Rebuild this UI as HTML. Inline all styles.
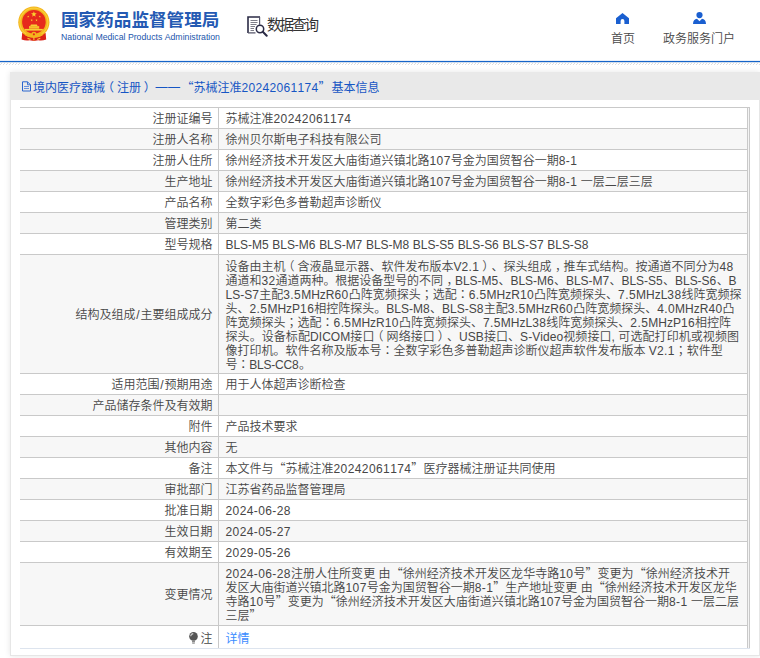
<!DOCTYPE html>
<html lang="zh-CN">
<head>
<meta charset="utf-8">
<title>国家药品监督管理局 数据查询</title>
<style>
*{box-sizing:border-box;margin:0;padding:0}
html,body{width:760px;height:658px;overflow:hidden;background:#fff}
body{position:relative;font-family:"Liberation Sans","Noto Sans CJK SC",sans-serif;font-size:12px;color:#444;font-weight:350;text-spacing-trim:space-all;font-kerning:none}
.cjk{font-family:"Noto Sans CJK SC","Liberation Sans",sans-serif}
/* header */
#hdr{position:absolute;left:0;top:0;width:760px;height:61px;background:#fff}
#emblem{position:absolute;left:17px;top:6px;width:34px;height:36px}
#t1{position:absolute;left:61px;top:7px;font-size:17.6px;line-height:24px;font-weight:700;color:#245ab3;white-space:nowrap;letter-spacing:0}
#t2{position:absolute;left:61px;top:31px;font-size:8.720px;line-height:12px;color:#2156ac;white-space:nowrap}
#q{position:absolute;left:247px;top:14px;height:22px;white-space:nowrap}
#q svg{position:absolute;left:0;top:2px}
#q span{position:absolute;left:20px;top:-1px;font-size:14.600px;line-height:21px;color:#333;letter-spacing:-2.100px;font-weight:400}
.nav{position:absolute;top:0;text-align:center;font-size:12px;color:#484848;white-space:nowrap}
.nav svg{display:block}
#blue{position:absolute;left:0;top:60px;width:760px;height:3px;background:linear-gradient(to bottom,rgba(22,100,200,.10) 0,rgba(22,100,200,.10) 1px,#1664c8 1px,#1664c8 2px,rgba(22,100,200,.22) 2px,rgba(22,100,200,.22) 3px)}
#hatch{position:absolute;left:0;top:62px;width:760px;height:3px;
 background:repeating-linear-gradient(135deg,#dedede 0,#dedede .55px,transparent .55px,transparent 2.120px)}
/* panel */
#panel{position:absolute;left:10px;top:72px;width:750px;height:584px;background:#fff;border:1px solid #e6e6e6;box-shadow:0 0 6px rgba(0,0,0,.10)}
#ptitle{position:absolute;left:-1px;top:-1px;width:750px;height:28px;background:#e9e9e9}
#ptitle .txt{position:absolute;left:23px;top:7px;font-size:12px;height:16px;line-height:16px;color:#1656c4;white-space:nowrap;font-weight:400}
#ptitle b{font-weight:inherit;letter-spacing:.33px}
#ptitle span{line-height:16px}
#ptitle svg{position:absolute;left:11px;top:9px}
/* table */
#tb{position:absolute;left:20px;top:107px;width:730px;border-collapse:collapse;table-layout:fixed}
#tb td{border-top:1px solid #c9c9c9;padding:4px 0 2px;line-height:14px;font-size:12px;vertical-align:middle;color:#464646;white-space:nowrap}
#tb td.l{width:198px;text-align:right;padding-right:5px;border-right:1px solid #c9c9c9;color:#464646}
#tb td.v{padding-left:7px}
#tb i{display:block;font-style:normal;height:14px;line-height:14px;white-space:nowrap}
#tb tr.a td{background:#f7f7f7}
#tb b{font-weight:inherit;letter-spacing:.4px}
#tb u{text-decoration:none;font-family:"Liberation Sans","Noto Sans CJK JP","Noto Sans CJK SC",sans-serif}
em{font-style:normal;position:relative}
em.pl{left:-3px}em.pr{left:2.800px}em.pc{left:3.500px}
#tb s{text-decoration:none;margin:0 .85px}
#tb a{color:#3b8cff;text-decoration:none;font-weight:400}
#tb td.m{padding:5px 0 1px 7px}
#tb td.q i{position:relative;top:-1px}
#tb tr.last td{padding:6px 0 2px}
#tb tr.last td.l{padding-right:5px}
#tb tr.last td.v{padding-left:7px}
#rb1,#rb2{position:absolute;top:107px;width:1px;height:541px;background:#c9c9c9}
#rbg{position:absolute;left:748px;top:108px;width:1px;height:540px;background:#f4f4f4}
#rb1{left:747px}#rb2{left:749px}
#bb{position:absolute;left:20px;top:648px;width:730px;height:1px;background:#dde4ee}
</style>
</head>
<body>
<div id="hdr">
 <svg id="emblem" viewBox="0 0 34 36">
  <path d="M5.200 27 L4.600 33.400 Q9 35.200 12.500 34.200 L16.900 35 L21.300 34.200 Q24.800 35.200 29.200 33.400 L28.600 27 Z" fill="#dc2318"/>
  <circle cx="16.850" cy="16.200" r="15.600" fill="#f4b51d"/>
  <circle cx="16.850" cy="16.200" r="14" fill="none" stroke="#f9cf3a" stroke-width="1.200"/>
  <circle cx="16.900" cy="15.900" r="11.800" fill="#e62a1c"/>
  <path d="M16.90 5.30L17.61 7.33L19.75 7.37L18.04 8.67L18.66 10.73L16.90 9.50L15.14 10.73L15.76 8.67L14.05 7.37L16.19 7.33z" fill="#fbd52f"/><path d="M11.20 9.40L11.48 10.21L12.34 10.23L11.66 10.75L11.91 11.57L11.20 11.08L10.49 11.57L10.74 10.75L10.06 10.23L10.92 10.21z" fill="#fbd52f"/><path d="M22.80 9.40L23.08 10.21L23.94 10.23L23.26 10.75L23.51 11.57L22.80 11.08L22.09 11.57L22.34 10.75L21.66 10.23L22.52 10.21z" fill="#fbd52f"/><path d="M14.70 13.00L14.98 13.81L15.84 13.83L15.16 14.35L15.41 15.17L14.70 14.68L13.99 15.17L14.24 14.35L13.56 13.83L14.42 13.81z" fill="#fbd52f"/><path d="M19.50 13.00L19.78 13.81L20.64 13.83L19.96 14.35L20.21 15.17L19.50 14.68L18.79 15.17L19.04 14.35L18.36 13.83L19.22 13.81z" fill="#fbd52f"/>
  <path d="M13.200 19.900l.8-1.300h5.800l.8 1.300z" fill="#f8cd35"/>
  <path d="M12 20.100h10.200v2.600h-10.200z" fill="#f6c22b"/>
  <path d="M8 22.900h17.800v1.700h-17.800z" fill="#f8cd35"/>
  <path d="M9.500 27.600 Q16.900 31.500 24.300 27.600 L25.500 29.600 Q16.900 33.800 8.300 29.600z" fill="#f4b51d"/>
  <circle cx="16.900" cy="28.300" r="2.600" fill="#f4b51d"/><circle cx="16.900" cy="28.300" r="1.100" fill="#e62a1c"/>
  <path d="M10.500 32.200l3 1.200M23.300 32.200l-3 1.200M16.900 31.500v3" stroke="#f8cd35" stroke-width="1.100" fill="none"/>
 </svg>
 <div id="t1" class="cjk">国家药品监督管理局</div>
 <div id="t2">National Medical Products Administration</div>
 <div id="q">
  <svg width="21" height="21" viewBox="0 0 21 21" fill="none">
   <path d="M1 17V1h12" stroke="#2b2b45" stroke-width="1.600"/>
   <path d="M12.600 1v7.800M1 16.800h7.500" stroke="#55556a" stroke-width="1.200"/>
   <path d="M3.500 4.500h7M3.500 6.500h7M3.500 8.500h6M3.500 10.500h4.500M3.500 12.500h3.500M3.500 14.500h3.500" stroke="#7d7d88" stroke-width="1.100"/>
   <circle cx="13" cy="13" r="3.700" stroke="#2b2b45" stroke-width="1.500" fill="#fff"/>
   <path d="M15.800 15.800l3.900 4" stroke="#2b2b45" stroke-width="2" stroke-linecap="round"/>
  </svg>
  <span class="cjk">数据查询</span>
 </div>
 <div class="nav" style="left:603px;width:40px">
  <svg width="13" height="11" viewBox="0 0 13 11" style="margin-top:12.500px;margin-left:13px"><path d="M6.500 0L0 5.200V11h4.600V8a1.900 1.900 0 0 1 3.800 0v3H13V5.200z" fill="#1a5fd0"/></svg>
  <div class="cjk" style="margin-top:6.500px;line-height:16px">首页</div>
 </div>
 <div class="nav" style="left:652px;width:94px">
  <svg width="13" height="12" viewBox="0 0 13 12" style="margin-top:12px;margin-left:40.500px"><circle cx="6.500" cy="3.100" r="3.100" fill="#1a5fd0"/><path d="M0 12c0-3.400 1.600-5 4-5.300L6.500 9.200 9 6.700c2.400.3 4 1.900 4 5.300z" fill="#1a5fd0"/></svg>
  <div class="cjk" style="margin-top:6px;line-height:16px">政务服务门户</div>
 </div>
</div>
<div id="blue"></div>
<div id="hatch"></div>

<div id="panel">
 <div id="ptitle">
  <svg width="11" height="11" viewBox="0 0 11 11" fill="none" stroke="#2a66cf" stroke-width="1"><path d="M1.500 .8h5l3 3V10h-8z"/><path d="M6.500 .8v3h3" stroke-width=".9"/><path d="M3 5.500h5M3 7.500h5" stroke-width=".9" stroke="#5a88dc"/></svg>
  <div class="txt">境内医疗器械<em class="pl">（</em>注册<em class="pr">）</em><span style="margin-left:2.500px;letter-spacing:.4px;position:relative;top:-1.500px">——</span><span class="cjk" style="margin-left:1px">“</span>苏械注准<b>20242061174</b><span class="cjk" style="margin-right:1px">”</span>基本信息</div>
 </div>
</div>

<table id="tb" cellspacing="0">
 <tr><td class="l">注册证编号</td><td class="v">苏械注准<b>20242061174</b></td></tr>
 <tr class="a"><td class="l">注册人名称</td><td class="v">徐州贝尔斯电子科技有限公司</td></tr>
 <tr><td class="l">注册人住所</td><td class="v">徐州经济技术开发区大庙街道兴镇北路<b>107</b>号金为国贸智谷一期<b>8-1</b></td></tr>
 <tr class="a"><td class="l">生产地址</td><td class="v">徐州经济技术开发区大庙街道兴镇北路<b>107</b>号金为国贸智谷一期<b>8-1</b> 一层二层三层</td></tr>
 <tr><td class="l">产品名称</td><td class="v">全数字彩色多普勒超声诊断仪</td></tr>
 <tr class="a"><td class="l">管理类别</td><td class="v">第二类</td></tr>
 <tr><td class="l">型号规格</td><td class="v" style="letter-spacing:-.045px">BLS-M<b>5</b> BLS-M<b>6</b> BLS-M<b>7</b> BLS-M<b>8</b> BLS-S<b>5</b> BLS-S<b>6</b> BLS-S<b>7</b> BLS-S<b>8</b></td></tr>
 <tr class="a"><td class="l">结构及组成<s>/</s>主要组成成分</td><td class="v m"><i>设备由主机<em class="pl">（</em>含液晶显示器、软件发布版本V<b>2.1</b><em class="pr">）</em>、探头组成<em class="pc">，</em>推车式结构。按通道不同分为<b>48</b></i><i style="letter-spacing:-.04px">通道和<b>32</b>通道两种。根据设备型号的不同<em class="pc">，</em>BLS-M<b>5</b>、BLS-M<b>6</b>、BLS-M<b>7</b>、BLS-S<b>5</b>、BLS-S<b>6</b>、B</i><i>LS-S<b>7</b>主配<b>3.5</b>MHzR<b>60</b>凸阵宽频探头<u lang="ja">；</u>选配<u lang="ja">：</u><b>6.5</b>MHzR<b>10</b>凸阵宽频探头、<b>7.5</b>MHzL<b>38</b>线阵宽频探</i><i>头、<b>2.5</b>MHzP<b>16</b>相控阵探头。BLS-M<b>8</b>、BLS-S<b>8</b>主配<b>3.5</b>MHzR<b>60</b>凸阵宽频探头、<b>4.0</b>MHzR<b>40</b>凸</i><i>阵宽频探头<u lang="ja">；</u>选配<u lang="ja">：</u><b>6.5</b>MHzR<b>10</b>凸阵宽频探头、<b>7.5</b>MHzL<b>38</b>线阵宽频探头、<b>2.5</b>MHzP<b>16</b>相控阵</i><i style="letter-spacing:.07px">探头。设备标配DICOM接口<em class="pl">（</em>网络接口<em class="pr">）</em>、USB接口、S-Video视频接口, 可选配打印机或视频图</i><i>像打印机。软件名称及版本号<u lang="ja">：</u>全数字彩色多普勒超声诊断仪超声软件发布版本 V<b>2.1</b><u lang="ja">；</u>软件型</i><i style="letter-spacing:-.2px">号<u lang="ja">：</u>BLS-CC<b>8</b>。</i></td></tr>
 <tr><td class="l">适用范围<s>/</s>预期用途</td><td class="v">用于人体超声诊断检查</td></tr>
 <tr class="a"><td class="l">产品储存条件及有效期</td><td class="v"></td></tr>
 <tr><td class="l">附件</td><td class="v">产品技术要求</td></tr>
 <tr class="a"><td class="l">其他内容</td><td class="v">无</td></tr>
 <tr><td class="l">备注</td><td class="v q"><i>本文件与<span class="cjk">“</span>苏械注准<b>20242061174</b><span class="cjk">”</span>医疗器械注册证共同使用</i></td></tr>
 <tr class="a"><td class="l">审批部门</td><td class="v">江苏省药品监督管理局</td></tr>
 <tr><td class="l">批准日期</td><td class="v"><b>2024-06-28</b></td></tr>
 <tr class="a"><td class="l">生效日期</td><td class="v"><b>2024-05-27</b></td></tr>
 <tr><td class="l">有效期至</td><td class="v"><b>2029-05-26</b></td></tr>
 <tr class="a"><td class="l">变更情况</td><td class="v q"><i style="letter-spacing:.045px"><b>2024-06-28</b>注册人住所变更 由<span class="cjk">“</span>徐州经济技术开发区龙华寺路<b>10</b>号<span class="cjk">”</span>变更为<span class="cjk">“</span>徐州经济技术开</i><i>发区大庙街道兴镇北路<b>107</b>号金为国贸智谷一期<b>8-1</b><span class="cjk">”</span>生产地址变更 由<span class="cjk">“</span>徐州经济技术开发区龙华</i><i>寺路<b>10</b>号<span class="cjk">”</span>变更为<span class="cjk">“</span>徐州经济技术开发区大庙街道兴镇北路<b>107</b>号金为国贸智谷一期<b>8-1</b> 一层二层</i><i>三层<span class="cjk">”</span></i></td></tr>
 <tr class="last"><td class="l"><svg width="9" height="12" viewBox="0 0 9 12" style="vertical-align:-1.500px;margin-right:2px;position:relative;top:-1px"><circle cx="4.500" cy="4.400" r="4.300" fill="#565656"/><path d="M3 8.300h3v2.200h-3z" fill="#8a8a8a"/><path d="M1.700 4.300a2.900 2.900 0 0 1 2.600-2.700" stroke="#c9c9c9" stroke-width="1.100" fill="none"/><path d="M3.200 11.300h2.600" stroke="#9a9a9a" stroke-width="1"/></svg>注</td><td class="v"><a>详情</a></td></tr>
</table>
<div id="rb1"></div><div id="rbg"></div><div id="rb2"></div><div id="bb"></div>
</body>
</html>
